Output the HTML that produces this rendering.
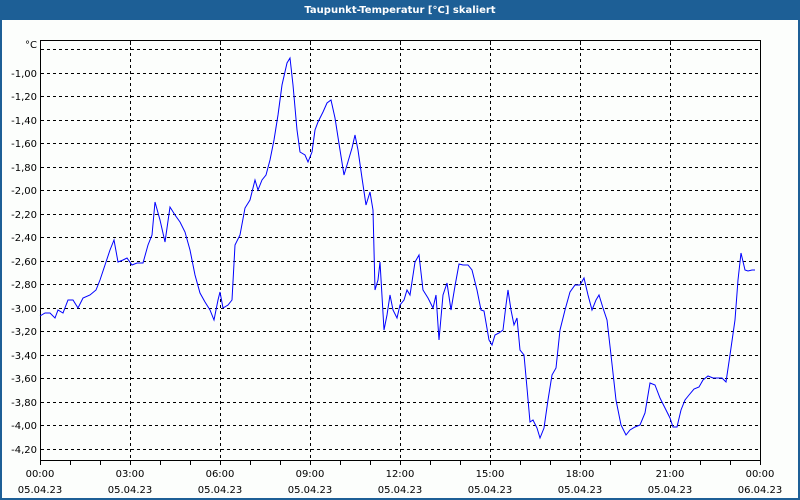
<!DOCTYPE html>
<html><head><meta charset="utf-8"><style>
html,body{margin:0;padding:0;width:800px;height:500px;overflow:hidden;background:#fcfefc}
svg{display:block}
text{font-family:"DejaVu Sans","Liberation Sans",sans-serif;font-size:10px;fill:#000}
</style></head><body>
<svg width="800" height="500" viewBox="0 0 800 500">
<rect x="0" y="0" width="800" height="500" fill="#1d5f96"/>
<rect x="2" y="20" width="796" height="478" fill="#fcfefc"/>
<text x="400" y="13" text-anchor="middle" style="fill:#fff;font-weight:bold;font-size:10px">Taupunkt-Temperatur [°C] skaliert</text>
<g stroke="#000" stroke-width="1" stroke-dasharray="3,3" fill="none">
<path d="M41 49.5H758M41 73.5H758M41 96.5H758M41 120.5H758M41 143.5H758M41 167.5H758M41 190.5H758M41 214.5H758M41 237.5H758M41 261.5H758M41 284.5H758M41 308.5H758M41 331.5H758M41 355.5H758M41 378.5H758M41 402.5H758M41 425.5H758M41 449.5H758"/>
<path d="M130.5 41V460M220.5 41V460M310.5 41V460M400.5 41V460M490.5 41V460M580.5 41V460M670.5 41V460"/>
</g>
<rect x="40.5" y="40.5" width="720" height="420" fill="none" stroke="#000"/>
<g stroke="#000" fill="none">
<path d="M70.5 461v4M100.5 461v4M130.5 461v4M160.5 461v4M190.5 461v4M220.5 461v4M250.5 461v4M280.5 461v4M310.5 461v4M340.5 461v4M370.5 461v4M400.5 461v4M430.5 461v4M460.5 461v4M490.5 461v4M520.5 461v4M550.5 461v4M580.5 461v4M610.5 461v4M640.5 461v4M670.5 461v4M700.5 461v4M730.5 461v4M40.5 461v4M760.5 461v4"/>
<path d="M130.5 41v4M220.5 41v4M310.5 41v4M400.5 41v4M490.5 41v4M580.5 41v4M670.5 41v4"/>
</g>
<g text-anchor="end">
<text x="37" y="48">°C</text>
<text x="37" y="77">-1,00</text><text x="37" y="100">-1,20</text><text x="37" y="124">-1,40</text><text x="37" y="147">-1,60</text><text x="37" y="171">-1,80</text><text x="37" y="194">-2,00</text><text x="37" y="218">-2,20</text><text x="37" y="241">-2,40</text><text x="37" y="265">-2,60</text><text x="37" y="288">-2,80</text><text x="37" y="312">-3,00</text><text x="37" y="335">-3,20</text><text x="37" y="359">-3,40</text><text x="37" y="382">-3,60</text><text x="37" y="406">-3,80</text><text x="37" y="429">-4,00</text><text x="37" y="453">-4,20</text>
</g>
<g text-anchor="middle">
<text x="40" y="477">00:00</text><text x="40" y="493">05.04.23</text>
<text x="130" y="477">03:00</text><text x="130" y="493">05.04.23</text>
<text x="220" y="477">06:00</text><text x="220" y="493">05.04.23</text>
<text x="310" y="477">09:00</text><text x="310" y="493">05.04.23</text>
<text x="400" y="477">12:00</text><text x="400" y="493">05.04.23</text>
<text x="490" y="477">15:00</text><text x="490" y="493">05.04.23</text>
<text x="580" y="477">18:00</text><text x="580" y="493">05.04.23</text>
<text x="670" y="477">21:00</text><text x="670" y="493">05.04.23</text>
<text x="760" y="477">00:00</text><text x="760" y="493">06.04.23</text>
</g>
<polyline fill="none" stroke="#0000ff" stroke-width="1" points="40,316 45,313 50,313 55,318 58,310 63,313 68,300 73,300 78,308 83,298 90,295 96,290 100,280 105,265 110,250 114,240 118,262 123,260 127,258 132,265 137,263 143,263 148,245 152,235 155,202 160,220 165,242 170,207 175,215 180,222 185,232 190,250 195,275 200,293 205,302 210,310 214,320 218,300 220,292 223,308 228,305 232,300 235,245 240,235 245,208 250,200 255,180 258,190 262,180 266,175 270,160 274,140 278,115 282,85 287,63 290,58 293,85 297,130 300,152 305,155 308,162 312,152 315,130 318,122 323,112 327,103 331,100 335,118 340,150 344,175 347,165 352,148 355,135 358,150 362,178 366,205 370,192 373,210 375,290 378,280 380,262 384,330 387,315 390,295 393,310 397,318 400,305 404,300 407,290 410,295 415,262 419,255 423,290 428,298 433,308 436,295 439,340 443,295 447,283 451,310 455,286 459,264 463,265 468,265 472,270 477,290 481,310 484,311 489,340 492,345 495,335 499,333 503,330 506,305 508,290 511,310 514,325 517,318 520,350 524,355 527,388 530,422 533,420 537,428 540,438 544,428 548,400 552,375 556,368 560,330 565,310 570,292 575,285 580,285 584,278 588,295 592,310 596,300 599,295 603,308 607,320 611,355 616,400 621,425 626,435 630,430 635,427 640,425 645,413 650,383 655,385 660,398 665,408 670,418 673,427 677,427 681,410 685,400 689,395 694,389 699,387 703,380 708,376 713,378 718,378 722,378 726,382 730,355 735,320 738,280 741,253 745,270 748,271 752,270 755,270"/>
</svg>
</body></html>
